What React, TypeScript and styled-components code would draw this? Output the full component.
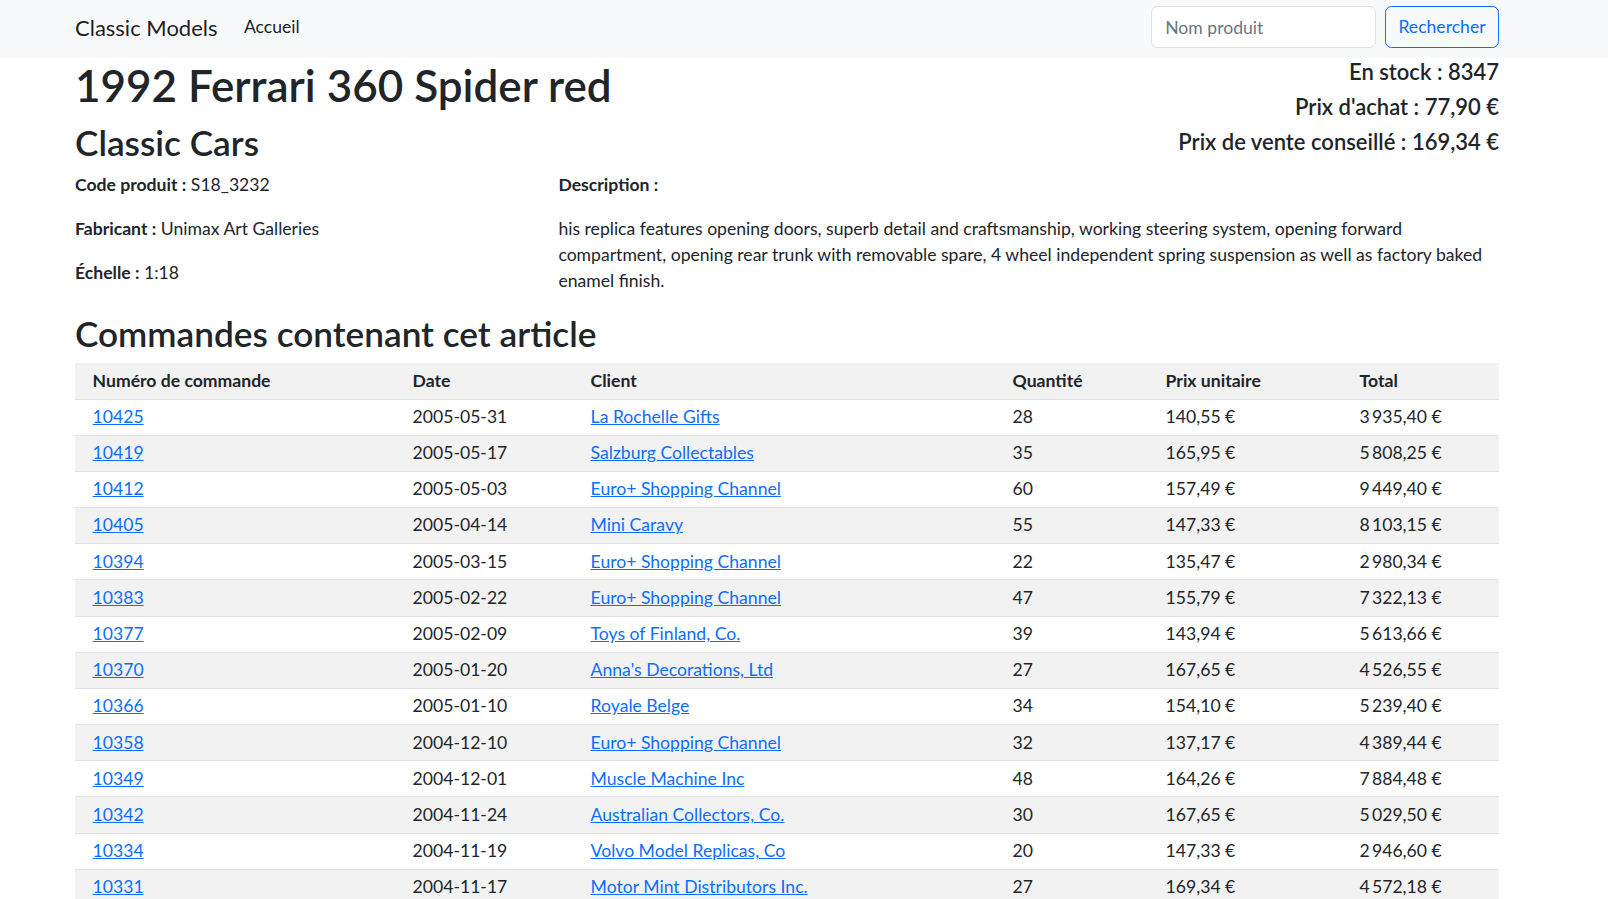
import React from 'react';
import styled, { createGlobalStyle } from 'styled-components';

const GlobalStyle = createGlobalStyle`
  * {
    box-sizing: border-box;
  }
  body {
    margin: 0;
    font-family: Lato, "Liberation Sans", sans-serif;
    font-size: 17.6px;
    line-height: 1.5;
    color: #212529;
    background-color: #ffffff;
  }
`;

type Order = {
  id: string;
  date: string;
  client: string;
  quantity: number;
  unitPrice: string;
  total: string;
};

const NB = '\u2009';

const orders: Order[] = [
  { id: '10425', date: '2005-05-31', client: 'La Rochelle Gifts', quantity: 28, unitPrice: '140,55 €', total: `3${NB}935,40 €` },
  { id: '10419', date: '2005-05-17', client: 'Salzburg Collectables', quantity: 35, unitPrice: '165,95 €', total: `5${NB}808,25 €` },
  { id: '10412', date: '2005-05-03', client: 'Euro+ Shopping Channel', quantity: 60, unitPrice: '157,49 €', total: `9${NB}449,40 €` },
  { id: '10405', date: '2005-04-14', client: 'Mini Caravy', quantity: 55, unitPrice: '147,33 €', total: `8${NB}103,15 €` },
  { id: '10394', date: '2005-03-15', client: 'Euro+ Shopping Channel', quantity: 22, unitPrice: '135,47 €', total: `2${NB}980,34 €` },
  { id: '10383', date: '2005-02-22', client: 'Euro+ Shopping Channel', quantity: 47, unitPrice: '155,79 €', total: `7${NB}322,13 €` },
  { id: '10377', date: '2005-02-09', client: 'Toys of Finland, Co.', quantity: 39, unitPrice: '143,94 €', total: `5${NB}613,66 €` },
  { id: '10370', date: '2005-01-20', client: "Anna's Decorations, Ltd", quantity: 27, unitPrice: '167,65 €', total: `4${NB}526,55 €` },
  { id: '10366', date: '2005-01-10', client: 'Royale Belge', quantity: 34, unitPrice: '154,10 €', total: `5${NB}239,40 €` },
  { id: '10358', date: '2004-12-10', client: 'Euro+ Shopping Channel', quantity: 32, unitPrice: '137,17 €', total: `4${NB}389,44 €` },
  { id: '10349', date: '2004-12-01', client: 'Muscle Machine Inc', quantity: 48, unitPrice: '164,26 €', total: `7${NB}884,48 €` },
  { id: '10342', date: '2004-11-24', client: 'Australian Collectors, Co.', quantity: 30, unitPrice: '167,65 €', total: `5${NB}029,50 €` },
  { id: '10334', date: '2004-11-19', client: 'Volvo Model Replicas, Co', quantity: 20, unitPrice: '147,33 €', total: `2${NB}946,60 €` },
  { id: '10331', date: '2004-11-17', client: 'Motor Mint Distributors Inc.', quantity: 27, unitPrice: '169,34 €', total: `4${NB}572,18 €` },
];

const columns = [
  { label: 'Numéro de commande', width: 320 },
  { label: 'Date', width: 178 },
  { label: 'Client', width: 422 },
  { label: 'Quantité', width: 153 },
  { label: 'Prix unitaire', width: 194 },
  { label: 'Total', width: 157 },
];

const App = () => {
  return (
    <>
      <GlobalStyle />
      <Navbar>
        <NavInner>
          <Brand href="#">Classic Models</Brand>
          <NavLink href="#">Accueil</NavLink>
          <SearchForm onSubmit={(e) => e.preventDefault()}>
            <SearchInput type="search" placeholder="Nom produit" />
            <SearchButton type="submit">Rechercher</SearchButton>
          </SearchForm>
        </NavInner>
      </Navbar>
      <Page>
        <Header>
          <div>
            <Title>1992 Ferrari 360 Spider red</Title>
            <Category>Classic Cars</Category>
          </div>
          <Figures>
            <Figure>En stock : 8347</Figure>
            <Figure>Prix d'achat : 77,90 €</Figure>
            <Figure>Prix de vente conseillé : 169,34 €</Figure>
          </Figures>
        </Header>
        <Details>
          <div>
            <Info>
              <strong>Code produit :</strong> S18_3232
            </Info>
            <Info>
              <strong>Fabricant :</strong> Unimax Art Galleries
            </Info>
            <Info>
              <strong>Échelle :</strong> 1:18
            </Info>
          </div>
          <div>
            <Info>
              <strong>Description :</strong>
            </Info>
            <Info>
              his replica features opening doors, superb detail and craftsmanship, working steering system, opening
              forward compartment, opening rear trunk with removable spare, 4 wheel independent spring suspension as
              well as factory baked enamel finish.
            </Info>
          </div>
        </Details>
        <SectionTitle>Commandes contenant cet article</SectionTitle>
        <OrdersTable>
          <colgroup>
            {columns.map((col) => (
              <col key={col.label} style={{ width: col.width }} />
            ))}
          </colgroup>
          <thead>
            <tr>
              {columns.map((col) => (
                <Th key={col.label}>{col.label}</Th>
              ))}
            </tr>
          </thead>
          <tbody>
            {orders.map((order, i) => (
              <Row key={order.id} striped={i % 2 === 1}>
                <Td>
                  <Link href="#">{order.id}</Link>
                </Td>
                <Td>{order.date}</Td>
                <Td>
                  <Link href="#">{order.client}</Link>
                </Td>
                <Td>{order.quantity}</Td>
                <Td>{order.unitPrice}</Td>
                <Td>{order.total}</Td>
              </Row>
            ))}
          </tbody>
        </OrdersTable>
      </Page>
    </>
  );
};

export default App;

const Navbar = styled.nav`
  background-color: #f8f9fa;
  height: 58px;
  padding: 6px 0 10px;
`;

const NavInner = styled.div`
  width: 1424px;
  margin-left: 75px;
  height: 42px;
  display: flex;
  align-items: center;
`;

const Brand = styled.a`
  font-size: 22px;
  color: rgba(0, 0, 0, 0.9);
  text-decoration: none;
  margin-right: 17.6px;
  white-space: nowrap;
`;

const NavLink = styled.a`
  padding: 0 8.8px;
  color: rgba(0, 0, 0, 0.9);
  text-decoration: none;
`;

const SearchForm = styled.form`
  margin-left: auto;
  display: flex;
  align-items: center;
`;

const SearchInput = styled.input`
  width: 225px;
  height: 42px;
  padding: 6.6px 13.2px;
  font: inherit;
  color: #212529;
  background-color: #ffffff;
  border: 1px solid #dee2e6;
  border-radius: 6.6px;
  outline: none;
  margin-right: 9px;
  &::placeholder {
    color: #6c757d;
  }
`;

const SearchButton = styled.button`
  width: 114px;
  height: 42px;
  font: inherit;
  color: #0d6efd;
  background-color: transparent;
  border: 1px solid #0d6efd;
  border-radius: 6.6px;
  cursor: pointer;
`;

const Page = styled.main`
  width: 1424px;
  margin-left: 75px;
  padding-top: 1px;
`;

const Header = styled.div`
  display: flex;
  justify-content: space-between;
  align-items: flex-start;
`;

const Title = styled.h1`
  margin: 0 0 8.8px;
  font-size: 44px;
  font-weight: 600;
  line-height: 1.2;
`;

const Category = styled.h2`
  margin: 0 0 8.8px;
  font-size: 35.2px;
  font-weight: 600;
  line-height: 1.2;
`;

const Figures = styled.div`
  text-align: right;
`;

const Figure = styled.h5`
  margin: 0 0 8.8px;
  font-size: 22px;
  font-weight: 600;
  line-height: 1.2;
`;

const Details = styled.div`
  display: grid;
  grid-template-columns: 457px 1fr;
  column-gap: 26.4px;
`;

const Info = styled.p`
  margin: 0 0 17.6px;
  strong {
    font-weight: 700;
  }
`;

const SectionTitle = styled.h2`
  margin: 0 0 8.8px;
  font-size: 35.2px;
  font-weight: 600;
  line-height: 1.2;
`;

const OrdersTable = styled.table`
  width: 100%;
  table-layout: fixed;
  border-collapse: collapse;
`;

const Th = styled.th`
  text-align: left;
  font-weight: 700;
  padding: 4.4px 17.6px;
  background-color: #f2f2f2;
  border-bottom: 1px solid #dee2e6;
  white-space: nowrap;
`;

const Row = styled.tr<{ striped: boolean }>`
  background-color: ${({ striped }) => (striped ? '#f2f2f2' : '#ffffff')};
`;

const Td = styled.td`
  padding: 4.4px 17.6px;
  border-bottom: 1px solid #dee2e6;
  white-space: nowrap;
`;

const Link = styled.a`
  color: #0d6efd;
  text-decoration: underline;
`;
